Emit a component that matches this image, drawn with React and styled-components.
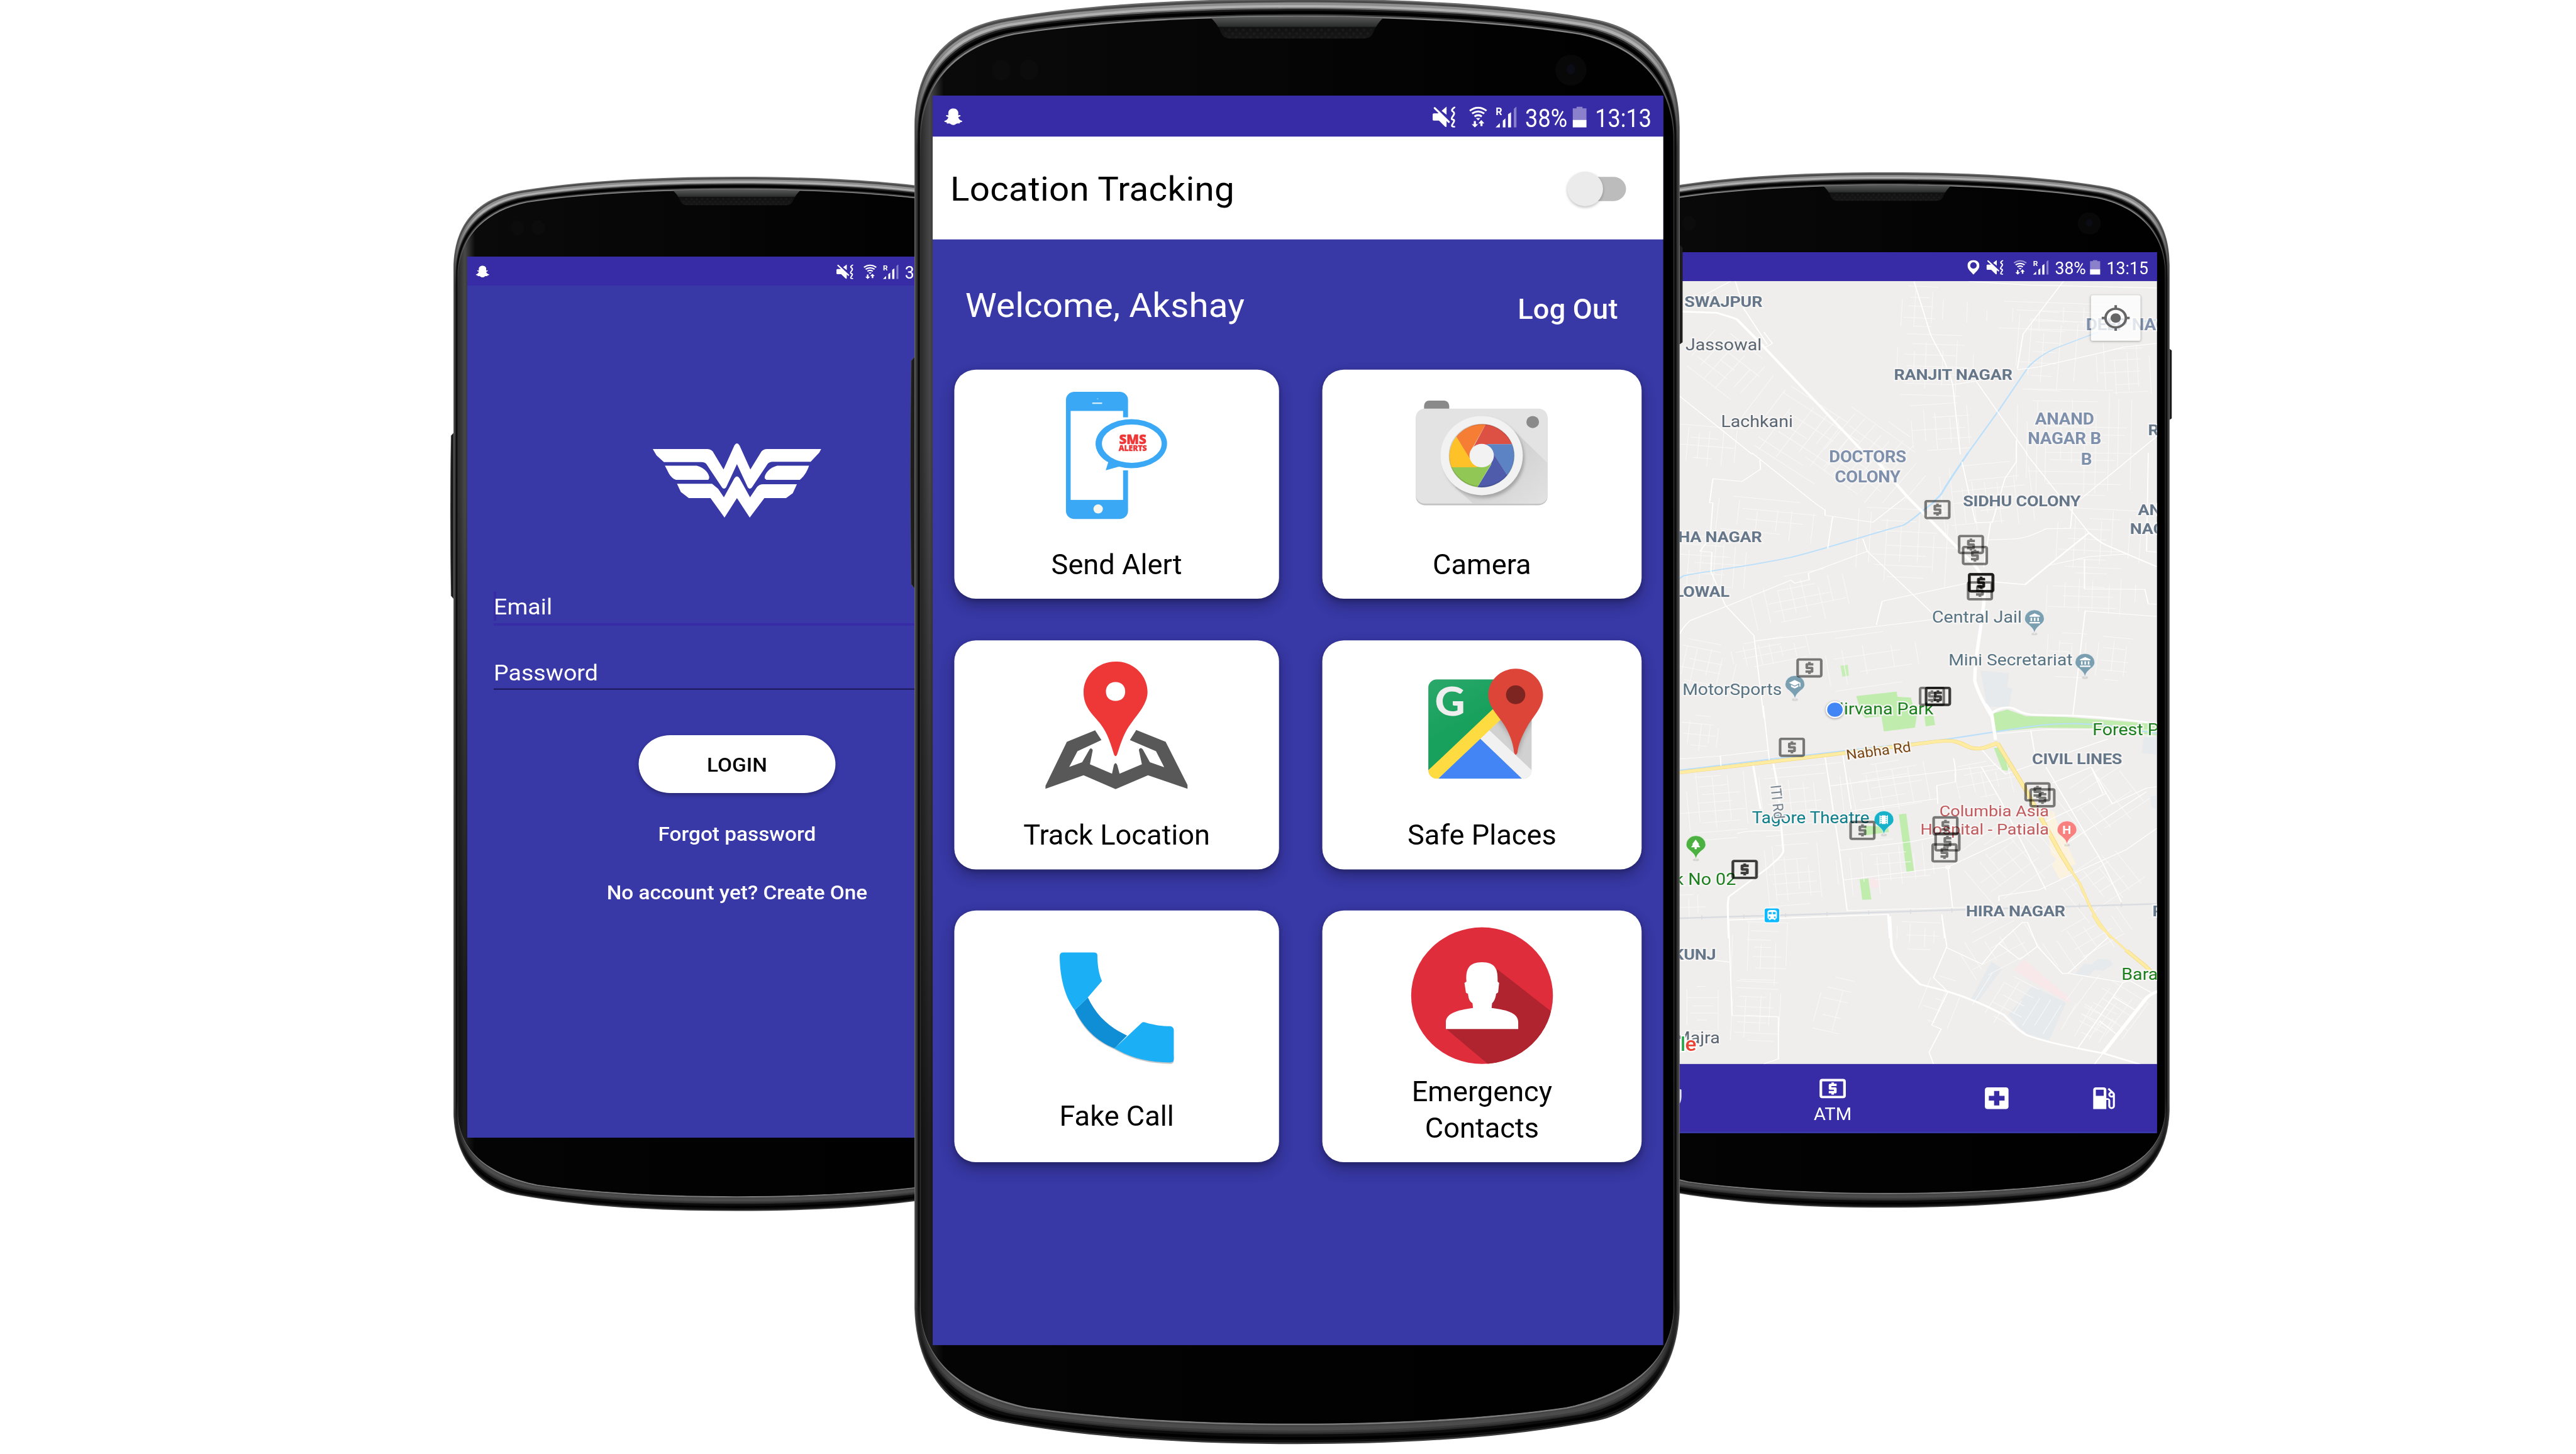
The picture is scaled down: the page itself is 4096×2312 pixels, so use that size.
import React from 'react';
import styled, { createGlobalStyle, css } from 'styled-components';
import {
  MdLocalAtm, MdLocalHospital, MdLocalGasStation, MdSecurity, MdGpsFixed,
  MdAccountBalance, MdSchool, MdPark, MdTheaters, MdTrain,
} from 'react-icons/md';
import { FaSnapchatGhost } from 'react-icons/fa';

const K = 4096 / 4894;
const u = (n) => `${(n * K).toFixed(2)}px`;

const color = {
  status: '#372ba6',
  brand: '#3838a6',
  slate: '#66778a',
  haze: '#7e90ab',
  place: '#5b6673',
  poi: '#587483',
  park: '#1c7f1f',
  medical: '#c05a5e',
  teal: '#0f7f8c',
};

const GlobalStyle = createGlobalStyle`
  * { box-sizing: border-box; }
  html, body { margin: 0; padding: 0; background: #fff; }
  body { font-family: Roboto, "Liberation Sans", sans-serif; overflow: hidden; }
  svg { display: block; }
`;

const Stage = styled.main`
  display: flex;
  align-items: flex-start;
  width: 100vw;
  height: 100vh;
  overflow: hidden;
  background: #fff;
`;

/* ---------- handset ---------- */

const Handset = styled.section`
  display: grid;
  flex: none;
  position: relative;
  z-index: ${(p) => p.$layer};
  width: ${(p) => u(p.$w)};
  height: ${(p) => u(p.$h)};
  margin-left: ${(p) => u(p.$x)};
  margin-top: ${(p) => u(p.$y)};
  > * { grid-area: 1 / 1; }
`;

const Glass = styled.div`
  position: relative;
  width: ${(p) => u(p.$w)};
  height: ${(p) => u(p.$h)};
  margin: ${(p) => u(p.$top)} 0 0 ${(p) => u(p.$left)};
  overflow: hidden;
`;

const Screen = styled.div`
  display: flex;
  flex-direction: column;
  width: 1080px;
  height: 1920px;
  background: ${color.brand};
  color: #fff;
  transform-origin: 0 0;
  transform: scale(${(p) => (p.$w * K) / 1080}, ${(p) => (p.$h * K) / 1920});
`;

const Body = styled.svg`
  width: 100%;
  height: 100%;
  overflow: visible;
`;

const OUTER = [0, 175, 0, 95, 40, 40, 130, 26, 250, 6, 400, 0, 538, 0, 538, 1965, 400, 1965, 250, 1958, 120, 1934, 45, 1920, 2, 1860, 0, 1780];
const INNER = [9, 185, 12, 115, 60, 65, 140, 49, 250, 32, 400, 25, 538, 25, 538, 1937, 400, 1937, 270, 1930, 160, 1915, 70, 1896, 14, 1855, 9, 1785];

function outline(k) {
  const p = OUTER.map((v, i) => +(v + (INNER[i] - v) * k).toFixed(2));
  const m = (i) => `${1076 - p[i]},${p[i + 1]}`;
  const l = (i) => `${p[i]},${p[i + 1]}`;
  return `M${l(0)} C${l(2)} ${l(4)} ${l(6)} C${l(8)} ${l(10)} ${l(12)} `
    + `C${m(10)} ${m(8)} ${m(6)} C${m(4)} ${m(2)} ${m(0)} L${m(26)} `
    + `C${m(24)} ${m(22)} ${m(20)} C${m(18)} ${m(16)} ${l(14)} `
    + `C${l(16)} ${l(18)} ${l(20)} C${l(22)} ${l(24)} ${l(26)} Z`;
}

/* rim layers: depth, colour at the top edge, along the sides, at the bottom edge */
const RIM = [
  [0, '#6a6a6a', '#6e6e6e', '#3a3a3a'],
  [0.08, '#4a4a4a', '#4a4a4a', '#101010'],
  [0.2, '#8e8e8e', '#3c3c3c', '#000'],
  [0.34, '#b0b0b0', '#303030', '#0c0c0c'],
  [0.48, '#6a6a6a', '#1c1c1c', '#2c2c2c'],
  [0.56, '#1a1a1a', '#0c0c0c', '#3c3c3c'],
  [0.66, '#000', '#0a0a0a', '#4c4c4c'],
  [0.84, '#3a3a3a', '#2a2a2a', '#444'],
  [0.92, '#868686', '#333', '#7c7c7c'],
];

function HandsetBody({ id }) {
  return (
    <Body viewBox="0 0 1076 1965" preserveAspectRatio="none">
      <defs>
        {RIM.map((r, i) => (
          <linearGradient key={i} id={`${id}r${i}`} x1="0" x2="0" y1="0" y2="1">
            <stop offset="0.03" stopColor={r[1]} />
            <stop offset="0.1" stopColor={r[2]} />
            <stop offset="0.9" stopColor={r[2]} />
            <stop offset="0.965" stopColor={r[3]} />
          </linearGradient>
        ))}
        <linearGradient id={`${id}g`} x1="0" x2="1" y1="0" y2="0">
          <stop offset="0" stopColor="#2a2a2a" />
          <stop offset="0.012" stopColor="#484848" />
          <stop offset="0.03" stopColor="#0a0a0a" />
          <stop offset="0.6" stopColor="#040404" />
          <stop offset="1" stopColor="#000" />
        </linearGradient>
        <linearGradient id={`${id}s`} x1="0" x2="0" y1="0" y2="1">
          <stop offset="0" stopColor="#5a5a5a" />
          <stop offset="0.45" stopColor="#2c2e2e" />
          <stop offset="0.5" stopColor="#111" />
          <stop offset="1" stopColor="#171717" />
        </linearGradient>
        <linearGradient id={`${id}f`} x1="0" x2="0" y1="0" y2="1">
          <stop offset="0.3" stopColor="#000" stopOpacity="0" />
          <stop offset="0.8" stopColor="#000" stopOpacity="0.6" />
        </linearGradient>
        <pattern id={`${id}m`} width="10" height="10" patternUnits="userSpaceOnUse">
          <circle cx="2.5" cy="2.5" r="1.8" fill="#1c1c1c" />
          <circle cx="7.5" cy="7.5" r="1.8" fill="#1c1c1c" />
        </pattern>
      </defs>
      <path d="M2,485 L-4.5,492 Q-7,640 -4.500,796 L2,804 Z" fill="#1c1c1c" stroke="#555" strokeOpacity="0.6" strokeWidth="1" />
      <path d="M1074,334 L1080,338 V467 L1074,471 Z" fill="#1c1c1c" />
      {RIM.map((r, i) => <path key={i} d={outline(r[0])} fill={`url(#${id}r${i})`} />)}
      <path d={outline(1)} fill={`url(#${id}g)`} />
      <path d={outline(1)} fill={`url(#${id}f)`} />
      <path d="M417,26 Q538,22 659,26 Q650,34 645,46 Q642,54 632,54 H444 Q434,54 431,46 Q426,34 417,26Z" fill={`url(#${id}s)`} />
      <path d="M432,40 H644 L636,54 H440Z" fill={`url(#${id}m)`} />
      <ellipse cx="122" cy="97" rx="13" ry="14" fill="#0c0c0c" />
      <ellipse cx="161" cy="97" rx="13" ry="14" fill="#0c0c0c" />
      <ellipse cx="923" cy="97" rx="22" ry="21" fill="#080809" />
      <ellipse cx="923" cy="96" rx="6" ry="7" fill="#0c0c16" />
    </Body>
  );
}

function Phone({ id, layer = 1, frame, screen, children }) {
  const [x, y, w, h] = frame;
  const [left, top, sw, sh] = screen;
  return (
    <Handset $layer={layer} $x={x} $y={y} $w={w} $h={h}>
      <HandsetBody id={id} />
      <Glass $left={left} $top={top} $w={sw} $h={sh}>
        <Screen $w={sw} $h={sh}>{children}</Screen>
      </Glass>
    </Handset>
  );
}

/* ---------- status bar ---------- */

const StatusBarRow = styled.header`
  display: flex;
  align-items: center;
  justify-content: space-between;
  flex: none;
  height: 63px;
  padding: 2.500px 17px 0 17px;
  background: ${color.status};
`;

const StatusGroup = styled.div`
  display: flex;
  align-items: center;
  margin-left: auto;
`;

const StatusGlyph = styled.svg`
  flex: none;
  width: ${(p) => p.$w}px;
  height: 32px;
  margin-right: ${(p) => p.$gap}px;
`;

const StatusText = styled.span`
  display: flex;
  justify-content: center;
  width: ${(p) => p.$w}px;
  margin-right: ${(p) => p.$gap || 0}px;
  font-size: 39px;
  line-height: 32px;
  white-space: nowrap;
  transform: translateY(2.500px) scaleX(0.86);
`;

function StatusBar({ time, located, ghost = true, dimWifi }) {
  return (
    <StatusBarRow>
      {ghost && <FaSnapchatGhost size={27} />}
      <StatusGroup>
        {located && (
          <StatusGlyph $w={24} $gap={14} viewBox="0 0 24 32">
            <path fillRule="evenodd" fill="#fff" d="M12 0C5 0 0 5 0 12c0 9 9 15 12 20c3-5 12-11 12-20C24 5 19 0 12 0zM12 5a6.5 7 0 1 1 0 14a6.5 7 0 1 1 0-14z" />
          </StatusGlyph>
        )}
        <StatusGlyph $w={34} $gap={20} viewBox="67 38 130 119" preserveAspectRatio="none">
          <path d="M67 84Q67 76 75 76H96L108 72 146 112V148Q146 158 138 153L103 118H75Q67 118 67 110ZM118 62L146 38V84Z" fill="#fff" />
          <path d="M79 46L159 125" stroke="#fff" strokeWidth="11" strokeLinecap="round" />
          <path d="M191 42Q168 58 182 66T182 92 182 112 182 134 190 153" stroke="#fff" strokeWidth="10" strokeLinecap="round" fill="none" />
        </StatusGlyph>
        <StatusGlyph $w={27} $gap={12} viewBox="275 36 105 121" preserveAspectRatio="none">
          <g fill="none" stroke="#fff" strokeWidth="11">
            <path d="M279 60Q327 24 375 60" opacity={dimWifi ? 0.5 : 1} />
            <path d="M292 76Q327 52 362 76M306 93Q327 78 348 93" />
          </g>
          <path d="M314 102H340L327 116Z" fill="#fff" />
          <path d="M302 120H314V138H327L308 157 290 138H302Z" fill="#fff" />
          <path d="M340 149H352V133H363L345 113 328 133H340Z" fill="#fff" />
        </StatusGlyph>
        <StatusGlyph $w={31.5} $gap={12} viewBox="425 38 122 119" preserveAspectRatio="none">
          <text x="426" y="88" fontSize="58" fontWeight="700" fill="#fff" fontFamily="Roboto">R</text>
          <path d="M425 157L450 132V157ZM467 118L482 105V157H467ZM497 82L514 70V157H497Z" fill="#fff" />
          <path d="M530 50L545 38V157H530Z" fill="#fff" opacity="0.400" />
        </StatusGlyph>
        <StatusText $w={62} $gap={8.5}>38%</StatusText>
        <StatusGlyph $w={20.5} $gap={12.5} viewBox="0 0 21 32" preserveAspectRatio="none">
          <path d="M6 0h9v2.500h6V21H0V2.500h6z" fill="#8a80cc" />
          <path d="M0 20.500h21V32H0z" fill="#fff" />
        </StatusGlyph>
        <StatusText $w={84}>{time}</StatusText>
      </StatusGroup>
    </StatusBarRow>
  );
}

/* ---------- login screen ---------- */

const LoginForm = styled.div`
  display: flex;
  flex-direction: column;
  align-items: center;
  padding: 341.500px 53px 0;
`;

const Emblem = styled.svg`
  width: 339.700px;
  height: 166.400px;
  margin-bottom: 160px;
`;

const Field = styled.label`
  display: flex;
  align-items: flex-end;
  align-self: stretch;
  height: ${(p) => (p.$focused ? 73 : 140)}px;
  padding-bottom: ${(p) => (p.$focused ? 5 : 3)}px;
  border-bottom: ${(p) => (p.$focused ? `5px solid ${color.status}` : '3px solid #1d1a5c')};
`;

const FieldText = styled.span`
  padding: 6px 0 2px;
  font-size: 47.250px;
  line-height: 56px;
  box-shadow: ${(p) => (p.$focused ? `inset 5px 0 ${color.status}` : 'none')};
`;

const LoginButton = styled.button`
  width: 394px;
  height: 126px;
  margin: 99px 0 65px;
  padding: 3px 0 0;
  border: 0;
  border-radius: 63px;
  background: #fff;
  color: #000;
  font: 500 42px Roboto, sans-serif;
  box-shadow: 0 4px 8px rgba(0, 0, 0, 0.3);
`;

const FormLink = styled.a`
  margin-bottom: 77px;
  font-size: 42px;
  font-weight: 500;
  line-height: 50px;
`;

function LoginScreen() {
  return (
    <>
      <StatusBar time="13:13" />
      <LoginForm>
        <Emblem viewBox="660 1130 532 316" preserveAspectRatio="none" fill="#fff">
          <path d="M662 1157H832Q844 1157 850 1167L884 1242 918 1142Q926 1126 934 1142L968 1242 1003 1167Q1009 1157 1020 1157H1190L1184 1172 1157 1210H1038Q1027 1211 1022 1219L973 1316Q966 1326 960 1316L926 1220 892 1316Q885 1326 879 1316L830 1219Q825 1211 815 1211H697L674 1184Z" />
          <path d="M700 1226H800C825 1234 841 1262 839 1278L836 1285H735C714 1275 709 1245 700 1226Z" />
          <path d="M1152 1226H1052C1027 1234 1011 1262 1013 1278L1018 1285H1123C1140 1265 1147 1245 1152 1226Z" />
          <path d="M738 1301H848L867 1322 885 1357 918 1278Q926 1263 934 1278L967 1357 986 1320Q994 1303 1006 1303H1114L1101 1340 1080 1360H1012L966 1441 926 1360 887 1441 843 1360H775L750 1335Z" />
        </Emblem>
        <Field $focused><FieldText $focused>Email</FieldText></Field>
        <Field><FieldText>Password</FieldText></Field>
        <LoginButton>LOGIN</LoginButton>
        <FormLink>Forgot password</FormLink>
        <FormLink>No account yet? Create One</FormLink>
      </LoginForm>
    </>
  );
}

/* ---------- home screen ---------- */

const TrackingBar = styled.div`
  display: flex;
  align-items: center;
  justify-content: space-between;
  flex: none;
  height: 158px;
  padding: 2px 55px 0 26px;
  background: #fff;
  color: #000;
  font-size: 52.500px;
  letter-spacing: 0.300px;
`;

const SwitchTrack = styled.span`
  display: flex;
  align-items: center;
  width: 86px;
  height: 37px;
  border-radius: 19px;
  background: #bcbcbc;
`;

const SwitchThumb = styled.span`
  flex: none;
  width: 53px;
  height: 53px;
  margin-left: -1px;
  border-radius: 50%;
  background: #ebebeb;
  box-shadow: 0 2px 4px rgba(0, 0, 0, 0.25);
`;

const Greeting = styled.div`
  display: flex;
  align-items: baseline;
  justify-content: space-between;
  height: 200px;
  padding: 70px 67px 0 48px;
  font-size: 52.500px;
  line-height: 62px;
  letter-spacing: 0.150px;
`;

const LogOut = styled.a`
  position: relative;
  top: 3px;
  font-size: 42px;
  font-weight: 500;
`;

const CardGrid = styled.div`
  display: grid;
  grid-template-columns: 480px 472px;
  grid-template-rows: 352px 352px 387px;
  gap: 63.500px 64px;
  padding: 0 32px;
`;

const Card = styled.article`
  display: flex;
  flex-direction: column;
  align-items: center;
  padding-top: ${(p) => p.$top}px;
  border-radius: 32px;
  background: #fff;
  box-shadow: 0 10px 20px rgba(0, 0, 0, 0.28), 0 2px 6px rgba(0, 0, 0, 0.18);
`;

const CardIcon = styled.svg`
  flex: none;
  width: 215.500px;
  height: ${(p) => p.$h}px;
`;

const CardLabel = styled.span`
  width: 300px;
  margin-top: ${(p) => p.$gap}px;
  color: #000;
  font-size: 42px;
  line-height: 56px;
  text-align: center;
`;

function AlertIcon() {
  return (
    <CardIcon $h={206.3} viewBox="456 90 620 400" preserveAspectRatio="none">
      <rect x="551" y="100" width="264" height="379" rx="36" ry="24" fill="#3aa8f4" />
      <rect x="571" y="157" width="223" height="265" fill="#fff" />
      <rect x="792" y="176" width="26" height="158" fill="#fff" />
      <path d="M663 134H705" stroke="#d8eefc" strokeWidth="4" />
      <ellipse cx="686" cy="121" rx="3" ry="2" fill="#8fcdf8" />
      <ellipse cx="688" cy="449" rx="20" ry="13.500" fill="#f6f6ee" />
      <path d="M734 303L721 332Q720 335 726 333L786 321Z" fill="#3aa8f4" />
      <ellipse cx="829" cy="254.500" rx="152" ry="73" fill="#3aa8f4" />
      <ellipse cx="831" cy="254.500" rx="127" ry="57" fill="#fff" />
      <g fill="#ee3636" stroke="#ee3636" strokeWidth="0.800" fontFamily="Open Sans, sans-serif" fontWeight="800">
        <text transform="translate(777 255) scale(1.485 1)" fontSize="38" textLength="78" lengthAdjust="spacingAndGlyphs">SMS</text>
        <text transform="translate(775 277) scale(1.485 1)" fontSize="24.500" textLength="81" lengthAdjust="spacingAndGlyphs">ALERTS</text>
      </g>
    </CardIcon>
  );
}

function CameraIcon() {
  const arc = 'A139 94 0 0 1';
  return (
    <CardIcon $h={206.3} viewBox="443.500 90 620 400" preserveAspectRatio="none">
      <defs>
        <linearGradient id="camShade" x1="0" y1="0" x2="1" y2="1">
          <stop offset="0.300" stopColor="#cdcdcd" />
          <stop offset="1" stopColor="#e2e2e2" />
        </linearGradient>
        <filter id="camSoft" x="-20%" y="-20%" width="140%" height="140%"><feGaussianBlur stdDeviation="5" /></filter>
        <clipPath id="camBody"><rect x="473" y="150" width="560" height="284" rx="38" ry="26" /></clipPath>
      </defs>
      <path d="M508 151V142Q510 126 530 126H594Q613 127 615 142V151Z" fill="#8a8a8a" />
      <rect x="473" y="154" width="560" height="284" rx="38" ry="26" fill="#c3c3c3" />
      <rect x="473" y="150" width="560" height="283" rx="38" ry="26" fill="#e3e3e3" />
      <g clipPath="url(#camBody)">
        <path d="M895 218L1033 312V433H717L640 385Z" fill="url(#camShade)" />
        <ellipse cx="762" cy="298" rx="173" ry="118" fill="#9a9a9a" opacity="0.800" filter="url(#camSoft)" />
      </g>
      <ellipse cx="970" cy="190" rx="27" ry="18" fill="#8a8a8a" />
      <ellipse cx="753" cy="290" rx="175" ry="118" fill="#f2f2f2" />
      <path d={`M645 234${arc} 770 197L710 272 753 290 700 298Z`} fill="#f57d34" />
      <path d={`M770 197${arc} 882 256H780L753 290 710 275Z`} fill="#dd5144" />
      <path d={`M882 256${arc} 862 348L803 285 753 290 775 256Z`} fill="#5c84c4" />
      <path d={`M862 348${arc} 735 384L794 316 753 290 785 265Z`} fill="#4f5cab" />
      <path d={`M735 384${arc} 624 325H730L753 290 796 312Z`} fill="#91c755" />
      <path d={`M624 325${arc} 645 234L703 299 753 290 735 325Z`} fill="#fec228" />
      <ellipse cx="753" cy="290" rx="138" ry="93" fill="none" stroke="#000" strokeOpacity="0.130" strokeWidth="4" />
      <ellipse cx="753" cy="290" rx="52" ry="35" fill="#f2f2f2" />
    </CardIcon>
  );
}

function TrackIcon() {
  return (
    <CardIcon $h={206.3} viewBox="456 895 620 400" preserveAspectRatio="none">
      <path d="M555 1143L675 1109 702 1138 600 1171 565 1218 620 1204 652 1165Q659 1159 665 1168L653 1210 747 1238 755 1212Q762 1201 769 1212L779 1238 874 1210 861 1167Q867 1157 878 1166L908 1204 969 1219 934 1171 823 1138 850 1108 975 1143 1068 1272V1283L900 1243 762 1284 626 1243 464 1283V1274Z" fill="#585858" />
      <path fillRule="evenodd" fill="#ee3838" d="M762 904C838 904 898 945 898 995C898 1028 860 1058 828 1088C795 1118 781 1155 768 1182Q762 1190 756 1182C744 1155 730 1118 696 1088C660 1058 626 1038 626 995C626 945 686 904 762 904ZM762 965C735 965 721 978 721 993C721 1009 735 1021 762 1021C789 1021 803 1009 803 993C803 978 789 965 762 965Z" />
    </CardIcon>
  );
}

function PlacesIcon() {
  return (
    <CardIcon $h={206.3} viewBox="443.500 895 620 400" preserveAspectRatio="none">
      <defs>
        <clipPath id="mapTile"><rect x="526" y="957" width="440" height="296" rx="37" ry="25" /></clipPath>
        <linearGradient id="mapGreen" x1="0" y1="0" x2="0.600" y2="1">
          <stop offset="0" stopColor="#2ba86b" />
          <stop offset="0.500" stopColor="#18a15d" />
        </linearGradient>
        <filter id="pinSoft" x="-40%" y="-20%" width="180%" height="140%"><feGaussianBlur stdDeviation="9" /></filter>
      </defs>
      <g clipPath="url(#mapTile)">
        <rect x="526" y="957" width="440" height="296" fill="#d1d1d1" />
        <path d="M526 957H935L830 1040 526 1228Z" fill="url(#mapGreen)" />
        <path d="M1014 1010C1014 1050 960 1080 930 1130L905 1182 880 1130 800 1060Z" fill="#777" opacity="0.500" filter="url(#pinSoft)" />
        <path d="M745 1132L925 1253H568Z" fill="#4385f5" />
        <path d="M745 1132L783 1107 966 1228V1253H925Z" fill="#f1f1f1" />
        <path d="M526 1228L800 1046 850 1066 568 1253H526Z" fill="#fedc41" />
      </g>
      <text transform="translate(554 1065) scale(1.520 1)" fontFamily="Lato, sans-serif" fontWeight="900" fontSize="117" fill="#eee">G</text>
      <path d="M898 925C962 925 1014 960 1014 1003C1014 1040 975 1065 948 1096C920 1130 908 1155 905 1176Q898 1188 891 1176C888 1155 880 1130 852 1096C825 1065 781 1040 781 1003C781 960 834 925 898 925Z" fill="#dc4538" />
      <ellipse cx="897.500" cy="1003" rx="41" ry="28" fill="#7c2521" />
    </CardIcon>
  );
}

function CallIcon() {
  return (
    <CardIcon $h={234.4} viewBox="275 90 290 420" preserveAspectRatio="none">
      <path d="M337 348C355 400 380 432 416 453C450 481 485 492 528 493Q534 492 534 484V470L416 440Z" fill="#000" opacity="0.220" />
      <path d="M337 345L363 310C380 360 405 392 441 415L416 450C380 430 355 395 337 345Z" fill="#0f8dd5" />
      <path d="M307 196Q307 186 314 186H375Q382 186 382 194C382 222 385 245 391 265L363 310 337 345C315 305 307 245 307 196Z" fill="#1bb0f6" />
      <path d="M416 450L470 380Q473 376 478 379C495 386 510 389 527 389Q534 391 534 400V480Q534 489 526 489C485 488 450 478 416 450Z" fill="#1bb0f6" />
    </CardIcon>
  );
}

function ContactsIcon() {
  return (
    <CardIcon $h={234.4} viewBox="1000.500 90 290 420" preserveAspectRatio="none">
      <defs><clipPath id="disc"><ellipse cx="1146" cy="305" rx="141" ry="188" /></clipPath></defs>
      <ellipse cx="1146" cy="305" rx="141" ry="188" fill="#e02d3c" />
      <path clipPath="url(#disc)" d="M1176 232L1300 366V510H1172L1075 397 1165 330Z" fill="#b0242f" />
      <path fill="#fff" d="M1146 213C1172 213 1178 232 1177 266L1180 270 1178 296 1174 300C1173 312 1170 321 1166 326L1165 339C1200 345 1219 355 1218 380V397H1074V380C1073 355 1095 345 1128 339L1127 326C1120 320 1119 310 1118 300L1114 297 1111 270 1115 266C1113 232 1120 213 1146 213Z" />
    </CardIcon>
  );
}

const CARDS = [
  { label: 'Send Alert', Icon: AlertIcon, top: 29, gap: 37 },
  { label: 'Camera', Icon: CameraIcon, top: 29, gap: 37 },
  { label: 'Track Location', Icon: TrackIcon, top: 28.5, gap: 37.5 },
  { label: 'Safe Places', Icon: PlacesIcon, top: 28.5, gap: 37.5 },
  { label: 'Fake Call', Icon: CallIcon, top: 11, gap: 44 },
  { label: 'Emergency Contacts', Icon: ContactsIcon, top: 11, gap: 6 },
];

function HomeScreen() {
  return (
    <>
      <StatusBar time="13:13" />
      <TrackingBar>
        <span>Location Tracking</span>
        <SwitchTrack><SwitchThumb /></SwitchTrack>
      </TrackingBar>
      <Greeting>
        <span>Welcome, Akshay</span>
        <LogOut>Log Out</LogOut>
      </Greeting>
      <CardGrid>
        {CARDS.map(({ label, Icon, top, gap }) => (
          <Card key={label} $top={top}>
            <Icon />
            <CardLabel $gap={gap}>{label}</CardLabel>
          </Card>
        ))}
      </CardGrid>
    </>
  );
}

/* ---------- map screen ---------- */

const MapArea = styled.div`
  position: relative;
  flex: none;
  height: 1706px;
  overflow: hidden;
  background: #efeeec;
`;

const MapDrawing = styled.svg`
  width: 1080px;
  height: 1706px;
`;

const Label = styled.span`
  position: absolute;
  left: ${(p) => p.$x}px;
  top: ${(p) => p.$y - 61.5 - p.$size * 0.927}px;
  color: ${(p) => p.$c};
  font-size: ${(p) => p.$size}px;
  font-weight: ${(p) => p.$w};
  line-height: 1.172;
  white-space: nowrap;
  -webkit-text-stroke: 6px rgba(246, 245, 244, 0.9);
  paint-order: stroke fill;
  ${(p) => p.$w === 700 && css`letter-spacing: -0.3px;`}
  ${(p) => p.$anchor === 'end' && css`transform: translateX(-100%);`}
  ${(p) => p.$anchor === 'middle' && css`transform: translateX(-50%);`}
  ${(p) => p.$turn && css`transform: translateX(-50%) rotate(${p.$turn}deg);`}
`;

const Marker = styled.span`
  position: absolute;
  left: ${(p) => p.$x}px;
  top: ${(p) => p.$y - 62.5}px;
  transform: translate(-50%, ${(p) => (p.$hang ? '0' : '-50%')});
  color: ${(p) => p.$c || 'rgba(0, 0, 0, 0.5)'};
  display: flex;
`;

const Dot = styled.span`
  width: 37px;
  height: 37px;
  border: 3px solid #fff;
  border-radius: 50%;
  background: #4285f4;
  box-shadow: 0 1px 5px rgba(0, 0, 0, 0.4);
`;

const Transit = styled.span`
  display: flex;
  align-items: center;
  justify-content: center;
  width: 29px;
  height: 30px;
  border-radius: 4px;
  background: #0db9ff;
  color: #fff;
  box-shadow: 0 0 2px 1px #fff;
`;

const LocateButton = styled.button`
  position: absolute;
  top: 31px;
  right: 33px;
  display: flex;
  align-items: center;
  justify-content: center;
  width: 99px;
  height: 99px;
  padding: 0;
  border: 0;
  border-radius: 4px;
  background: rgba(255, 255, 255, 0.76);
  color: #666;
  box-shadow: 0 1px 5px rgba(0, 0, 0, 0.3);
`;

const Google = styled.span`
  position: absolute;
  left: 158px;
  bottom: 16px;
  transform: translateX(-100%);
  font: 500 42px Roboto, sans-serif;
  line-height: 52px;
  letter-spacing: -1px;
  -webkit-text-stroke: 5px #fff;
  paint-order: stroke fill;
`;

const Tint = styled.span`
  color: ${(p) => p.$c};
`;

const LABELS = [
  ['SWAJPUR', 135, 117.7, 'slate', 700, 34],
  ['Jassowal', 137, 213, 'place', 400, 36],
  ['Lachkani', 208, 380.2, 'place', 400, 36],
  ['DEEP NAGAR', 938, 169.3, 'haze', 700, 35],
  ['RANJIT NAGAR', 554, 276.6, 'slate', 700, 34],
  ['ANAND', 895, 373.7, 'haze', 700, 35, 'middle'],
  ['NAGAR B', 895, 416.7, 'haze', 700, 35, 'middle'],
  ['B', 939, 462, 'haze', 700, 35, 'middle'],
  ['RAGHO', 1062, 398, 'slate', 700, 34],
  ['DOCTORS', 501.4, 456.7, 'haze', 700, 34.5, 'middle'],
  ['COLONY', 501.4, 499.5, 'haze', 700, 34.5, 'middle'],
  ['SIDHU COLONY', 692, 552.3, 'slate', 700, 34],
  ['ANAND', 1042, 572.5, 'slate', 700, 34],
  ['NAGAR', 1026, 612.7, 'slate', 700, 34],
  ['HA NAGAR', 290, 630.7, 'slate', 700, 34, 'end'],
  ['LOWAL', 225, 750.3, 'slate', 700, 34, 'end'],
  ['Central Jail', 630, 805.8, 'poi', 400, 36],
  ['Mini Secretariat', 663, 900, 'poi', 400, 35.5],
  ['MotorSports', 131, 964, 'poi', 400, 35.5],
  ['Nirvana Park', 633, 1006, 'park', 400, 36, 'end'],
  ['Forest Park', 951, 1051, 'park', 400, 36],
  ['CIVIL LINES', 830, 1114.3, 'slate', 700, 34],
  ['Columbia Asia', 864, 1228, 'medical', 400, 34, 'end'],
  ['Hospital - Patiala', 864, 1268.3, 'medical', 400, 34, 'end'],
  ['Tagore Theatre', 270, 1243, 'teal', 400, 35],
  ['rk No 02', 238, 1377.3, 'park', 400, 36, 'end'],
  ['HIRA NAGAR', 698, 1445.7, 'slate', 700, 34],
  ['P', 1071, 1445.7, 'slate', 700, 34],
  ['KUNJ', 198, 1541.4, 'slate', 700, 34, 'end'],
  ['Majra', 206, 1722.6, 'place', 400, 36, 'end'],
  ['Baradari', 1009, 1584.4, 'park', 400, 36],
];

const ATMS = [
  [641, 560.7], [707.5, 636.4], [715.6, 660.5], [726.3, 737.7], [728.3, 719.7], [729, 720.5], [728.3, 719.7],
  [385.3, 905.5], [629.6, 967.5], [641.7, 967.5], [641.7, 967.5], [350.4, 1078.3],
  [841.1, 1175], [850.5, 1188], [490.7, 1259.9], [657.2, 1249.6], [661.2, 1284.4], [654.5, 1308.1],
  [255, 1344], [255.6, 1344.6],
];

const PINS = [
  [835, 778.6, '#7a9fb1', MdAccountBalance],
  [936.4, 873.4, '#7a9fb1', MdAccountBalance],
  [355.8, 921.2, '#7a9fb1', MdSchool],
  [533.6, 1216.3, '#17b2c9', MdTheaters],
  [157.7, 1270.2, '#4cb141', MdPark],
];

/* blocks of side streets: x, y, width, height, column step, row step, angle */
const BLOCKS = [
  [570, 75, 90, 90, 30, 22, 3], [700, 110, 330, 60, 46, 19, 2], [560, 180, 160, 150, 28, 20, 2],
  [590, 330, 130, 110, 24, 22, -4], [800, 130, 120, 180, 26, 24, 4], [800, 300, 250, 230, 24, 22, 1],
  [960, 190, 110, 130, 22, 24, -3], [250, 320, 230, 150, 30, 26, 35], [150, 190, 140, 120, 26, 30, 40],
  [120, 380, 130, 90, 22, 22, 5], [400, 370, 230, 170, 26, 28, 38], [200, 540, 220, 90, 34, 24, 6],
  [100, 620, 160, 120, 22, 22, 4], [270, 700, 200, 110, 28, 22, -12], [480, 560, 200, 170, 30, 26, 3],
  [650, 460, 200, 150, 28, 26, -6], [880, 560, 170, 140, 28, 24, 3], [860, 700, 190, 90, 32, 24, 2],
  [110, 850, 130, 110, 24, 22, 12], [230, 840, 180, 60, 30, 20, -12], [420, 830, 190, 120, 46, 36, -9],
  [860, 830, 80, 100, 22, 26, 3], [960, 840, 80, 100, 28, 22, 6], [120, 1010, 90, 80, 24, 22, 6],
  [120, 1120, 150, 160, 26, 24, -5], [290, 1120, 170, 160, 26, 24, -6], [470, 1110, 160, 110, 28, 20, -10],
  [440, 1280, 200, 120, 26, 28, -5], [300, 1290, 120, 140, 22, 26, -5], [680, 1110, 120, 90, 26, 24, -12],
  [700, 1250, 170, 150, 28, 24, -38], [900, 1130, 160, 130, 34, 28, -36], [900, 1320, 150, 110, 26, 24, -36],
  [230, 1460, 120, 140, 26, 20, 2], [230, 1590, 100, 130, 24, 20, 3], [140, 1600, 64, 100, 60, 20, 0],
  [560, 1460, 90, 60, 26, 24, 2], [690, 1460, 150, 110, 28, 24, -30], [860, 1450, 180, 90, 26, 24, -32],
  [720, 1590, 160, 110, 26, 24, 30], [900, 1590, 150, 120, 26, 24, 34], [100, 1400, 90, 60, 22, 26, -2],
  [610, 1580, 70, 110, 30, 24, 20], [900, 1640, 100, 90, 26, 22, 28], [400, 1580, 60, 140, 40, 34, 14],
];

function blockPath([, , w, h, sx, sy], seed) {
  let s = seed * 7919 + 13;
  const rnd = () => {
    s = (s * 1103515245 + 12345) % 2147483648;
    return s / 2147483648;
  };
  let d = '';
  for (let x = 0; x <= w; x += sx * (0.7 + rnd() * 0.6)) {
    d += `M${x.toFixed(1)} ${(rnd() * h * 0.35).toFixed(1)}V${(h * (0.65 + rnd() * 0.35)).toFixed(1)}`;
  }
  for (let y = 0; y <= h; y += sy * (0.7 + rnd() * 0.6)) {
    d += `M${(rnd() * w * 0.4).toFixed(1)} ${y.toFixed(1)}H${(w * (0.55 + rnd() * 0.45)).toFixed(1)}`;
  }
  return d;
}

const NORTH = 'matrix(.6713 0 0 .4096 92.6 -267.7)';
const MIDDLE = 'matrix(.6713 0 0 .3823 92.6 374.6)';
const CENTER = 'matrix(.6713 0 0 .3823 92.6 925.1)';
const SOUTH = 'matrix(.6713 0 0 .4389 92.6 1384)';

function MapCanvas() {
  return (
    <MapDrawing viewBox="0 0 1080 1706">
      <g transform={MIDDLE}>
        <path fill="#e6eaed" d="M945 1240L1030 1255 1025 1335 1040 1345 1030 1450 965 1445Z" />
        <path fill="#c8eeb8" d="M528 1212L550 1208 553 1270 534 1275Z" />
        <path fill="#c0ecae" d="M575 1385L695 1360 698 1390 738 1394 744 1440H760L750 1565 657 1587 650 1500 602 1510 590 1480Z" />
      </g>
      <g transform={CENTER}>
        <path fill="#c0ecae" d="M778 60L805 55 810 110 782 118ZM983 45L1025 22 1080 60 1200 65 1470 105V170L1300 130 1120 125 992 150ZM985 240H1000L1032 345 1025 372 1010 366ZM702 620L724 616 747 942 725 948ZM585 990L611 985 620 1105 593 1107ZM600 685L670 690 672 720 600 740Z" />
        <path fill="#fbf3df" d="M1140 600L1165 605 1168 640 1200 780 1230 905 1208 915 1212 960 1182 990 1158 910 1170 870 1155 850Z" />
        <path fill="#f8e8ea" d="M612 985L640 980 643 1035 618 1040Z" />
        <path fill="#e6eaed" d="M1432 180H1470V280L1425 268ZM1450 520L1470 510V590L1455 580Z" />
      </g>
      <g transform={SOUTH}>
        <path fill="#e6eaed" d="M978 225L1010 262 935 430 915 415ZM1100 345L1200 430 1150 615 1075 580 1028 490ZM1255 235L1275 240 1295 212 1330 215 1340 240 1310 272 1285 265 1270 295 1225 290Z" />
        <path fill="#f8e8ea" d="M1075 215L1210 405 1205 430 1045 268Z" />
      </g>
      <g fill="none" stroke="#f8f8f7" strokeWidth="1.400">
        {BLOCKS.map((b, i) => (
          <path key={i} transform={`translate(${b[0]} ${b[1] - 63}) rotate(${b[6]} ${b[2] / 2} ${b[3] / 2})`} d={blockPath(b, i + 1)} />
        ))}
      </g>
      <g transform={CENTER} fill="none">
        <path stroke="#d9dce0" strokeWidth="9" d="M0 1215L600 1180 860 1165 1470 1130" />
        <path stroke="#d9dce0" strokeWidth="3" d="M115 1195V1220M240 1190V1213M365 1183V1207M488 1176V1200M612 1168V1192M737 1162V1186M860 1155V1179M1240 1130V1154M1365 1124V1148" />
      </g>
      <g fill="none" stroke="#b9dffb" strokeWidth="6">
        <path transform={NORTH} strokeWidth="4.500" d="M1470 860L1400 875 1300 922 1170 1010C1120 1050 1090 1100 1080 1130L1000 1340 905 1575" />
        <path transform={MIDDLE} d="M908 0C880 80 850 160 828 235L800 290C770 330 745 380 715 412C600 470 480 550 380 595C260 645 150 665 60 700L30 740" />
        <path transform={CENTER} strokeWidth="7" d="M0 380L320 305 850 190 1090 120C1180 95 1250 100 1330 115L1470 158" />
      </g>
      <g fill="none" stroke="#fff" strokeWidth="3.500" strokeLinejoin="round">
        <g transform={NORTH}>
          <path d="M200 655L110 740M215 655L240 800 310 990M45 1260L265 1575M747 655L795 930C810 1000 840 1060 862 1200L885 1575M1192 655L1072 935 1055 1120M862 1205L1005 1165M1055 1125L1120 1110C1200 1075 1300 1040 1370 1005L1470 985M910 655L1090 675 1470 690M930 1180L1085 1575M1052 1500V1575M1470 1480L1405 1575M300 1010L325 985 300 925" />
          <path strokeWidth="9" d="M0 812L160 822C190 840 205 845 220 858L290 985 610 1590" />
        </g>
        <g transform={MIDDLE}>
          <path d="M265 0L455 290 482 325V355L625 395 722 250M148 147L235 162 290 92 288 40M148 147L138 285 148 283 140 480 110 560 145 565 142 675 185 868 270 1040 300 1510M505 360L490 545M595 490L608 560 740 800 800 910M608 560L432 685 435 722 392 742 380 725 200 865 80 955C60 990 55 1010 50 1030M275 1070L500 1020 800 950M635 980L652 845 905 742M890 50L930 395 980 397 1018 145 1052 50V0M1080 0L1268 455M1410 0L1220 300 1213 430 1140 432C1100 470 1070 490 1040 490L970 495M1145 642L1270 590 1385 575M1255 605V775L1435 778 1445 860 1470 862M1220 1500L1257 900 1470 932M1445 0L1440 560 1470 565M975 400L955 650" />
          <path strokeWidth="6" d="M970 732L1078 750 1145 645 1268 455C1285 480 1300 510 1320 525L1470 648" />
          <path strokeWidth="10" d="M625 20L725 245 800 390 930 645 957 720 955 860 945 1000 930 1200 928 1300C940 1380 960 1440 978 1500" />
        </g>
        <g transform={CENTER}>
          <path d="M45 305L165 288 315 255M170 285L172 345M298 0L316 310M482 290L525 825 548 1170M535 280L560 590M495 458L985 340 990 330M865 300C872 360 872 400 870 435L815 455 818 560M525 825L740 775 830 740M535 995L848 920 862 1150M848 920L1185 620 1320 500M948 350L1005 540 1140 1050M1140 350L1310 900 1365 1120M1275 350L1338 560 1440 470 1470 462M1190 800L1440 490M1095 140L1110 310M1000 1115V1085L1120 1050 1230 950 1380 820 1470 700M995 160L1150 135 1470 140M1325 190L1020 390 985 330 940 230M560 600L818 530M220 730C240 712 300 712 350 712M550 1168L900 1150M830 1190L838 1325M1310 500L1275 350 1160 440" />
          <path strokeWidth="6" d="M268 340L290 590M328 330L342 470 358 830C350 870 330 890 315 920L195 1090 192 1140 195 1325M195 1222L670 1190 675 1325" />
          <ellipse cx="848" cy="921" rx="6" ry="10" />
          <path strokeWidth="10" d="M960 -10L978 40 990 195M978 45C1000 10 1030 0 1050 22C1070 42 1085 52 1110 52L1230 58C1330 68 1400 85 1470 102" />
        </g>
        <g transform={SOUTH}>
          <path d="M195 20L205 493 343 500V708L300 733M830 0L845 150 805 305 830 345 848 375 800 540 828 560 792 675 805 733M843 155L950 238 1000 135 1070 30H1085L1115 150 1062 215 1000 135M1115 150L1190 285 1205 283 1370 328 1235 655M1205 285L1325 105M1370 328L1390 320 1455 380M1340 400L1405 465M1310 680L1285 733M130 215L200 228M1300 520L1350 585" />
          <path strokeWidth="8" d="M675 0L680 150C690 215 710 250 765 338L850 375C920 410 970 450 1015 490C1050 550 1060 570 1085 592C1150 630 1230 655 1310 680L1420 735" />
          <path strokeWidth="12" d="M1310 680L1440 405C1450 390 1460 380 1475 372" />
        </g>
      </g>
      {[['#f5d274', 3], ['#fdeca2', 0]].map(([stroke, grow]) => (
        <g key={stroke} fill="none" stroke={stroke} strokeLinejoin="round">
          <path transform={CENTER} strokeWidth={17 + grow} d="M0 392L330 318 560 265 820 203C900 190 890 240 935 245C960 245 975 225 998 212" />
          <path transform={CENTER} strokeWidth={11 + grow} d="M995 212L1080 480 1180 830 1215 940" />
          <path transform={CENTER} strokeWidth={7 + grow / 2} d="M1210 925L1240 1010 1270 1140C1285 1200 1310 1270 1335 1325" />
          <path transform={SOUTH} strokeWidth={6 + grow / 3} d="M1280 -5L1300 50 1340 110 1390 185" />
          <path transform={SOUTH} strokeWidth={11 + grow} d="M1380 170L1435 245 1475 310" />
        </g>
      ))}
    </MapDrawing>
  );
}

const PinFace = styled.span`
  position: relative;
  display: grid;
  width: 40px;
  height: 53px;
  > * { grid-area: 1 / 1; }
  > svg:last-child { margin: 7px auto 0; }
`;

function Pin({ fill, children }) {
  return (
    <PinFace>
      <svg width="40" height="53" viewBox="0 0 40 53" overflow="visible">
        <ellipse cx="20" cy="53" rx="6" ry="3" fill="#000" opacity="0.100" />
        <path d="M20 53C19 42 13 37 6 31C2 27 0.500 24 0.500 20A19.500 19.500 0 0 1 39.500 20C39.500 24 38 27 34 31C27 37 21 42 20 53Z" fill={fill} stroke="#fff" strokeOpacity="0.800" strokeWidth="1" />
      </svg>
      {children}
    </PinFace>
  );
}

const HospitalMark = styled.span`
  color: #fff;
  font-size: 25px;
  font-weight: 700;
  line-height: 40px;
  text-align: center;
`;

const BottomNav = styled.nav`
  display: grid;
  flex: none;
  grid-template-columns: 211px 441px 214px 214px;
  height: 147px;
  background: ${color.status};
`;

const NavItem = styled.div`
  display: flex;
  flex-direction: column;
  align-items: center;
  justify-content: ${(p) => (p.$active ? 'flex-start' : 'center')};
  gap: 3px;
  padding-top: ${(p) => (p.$active ? 22 : 1)}px;
  font-size: 36.750px;
  line-height: 44px;
  opacity: ${(p) => (p.$dim ? 0.85 : 1)};
`;

function MapScreen() {
  return (
    <>
      <StatusBar time="13:15" located ghost={false} dimWifi />
      <MapArea>
        <MapCanvas />
        {LABELS.map(([text, x, y, tone, weight, size, anchor], i) => (
          <Label key={i} $x={x} $y={y} $c={color[tone]} $w={weight} $size={size} $anchor={anchor}>{text}</Label>
        ))}
        <Label $x={523} $y={1095} $c="#7a4714" $w={400} $size={30} $turn={-8}>Nabha Rd</Label>
        <Label $x={321} $y={1206} $c="#75818d" $w={400} $size={29} $turn={84}>ITI Rd</Label>
        {PINS.map(([x, y, fill, Glyph], i) => (
          <Marker key={i} $x={x} $y={y} $c="#fff" $hang>
            <Pin fill={fill}><Glyph size={25} /></Pin>
          </Marker>
        ))}
        <Marker $x={899.5} $y={1238.5} $c="#fff" $hang>
          <Pin fill="#f8807f"><HospitalMark>H</HospitalMark></Pin>
        </Marker>
        <Marker $x={310} $y={1444}><Transit><MdTrain size={28} /></Transit></Marker>
        {ATMS.map(([x, y], i) => (
          <Marker key={i} $x={x} $y={y}><MdLocalAtm size={63} /></Marker>
        ))}
        <Marker $x={435.6} $y={996.5}><Dot /></Marker>
        <Google>
          <Tint $c="#4285f4">G</Tint><Tint $c="#ea4335">o</Tint><Tint $c="#fbbc05">o</Tint>
          <Tint $c="#4285f4">g</Tint><Tint $c="#34a853">l</Tint><Tint $c="#ea4335">e</Tint>
        </Google>
        <LocateButton><MdGpsFixed size={61} /></LocateButton>
      </MapArea>
      <BottomNav>
        <NavItem $dim><MdSecurity size={63} /></NavItem>
        <NavItem $active><MdLocalAtm size={63} />ATM</NavItem>
        <NavItem><MdLocalHospital size={63} /></NavItem>
        <NavItem><MdLocalGasStation size={63} /></NavItem>
      </BottomNav>
    </>
  );
}

export default function App() {
  return (
    <>
      <GlobalStyle />
      <Stage>
        <Phone id="a" frame={[862, 336, 1076, 1965]} screen={[26, 151, 1025, 1674]}>
          <LoginScreen />
        </Phone>
        <Phone id="b" layer={2} frame={[-201, -3, 1454, 2746]} screen={[35, 185, 1388, 2374]}>
          <HomeScreen />
        </Phone>
        <Phone id="c" frame={[-143, 327, 1074, 1967]} screen={[24, 152, 1026, 1674]}>
          <MapScreen />
        </Phone>
      </Stage>
    </>
  );
}
